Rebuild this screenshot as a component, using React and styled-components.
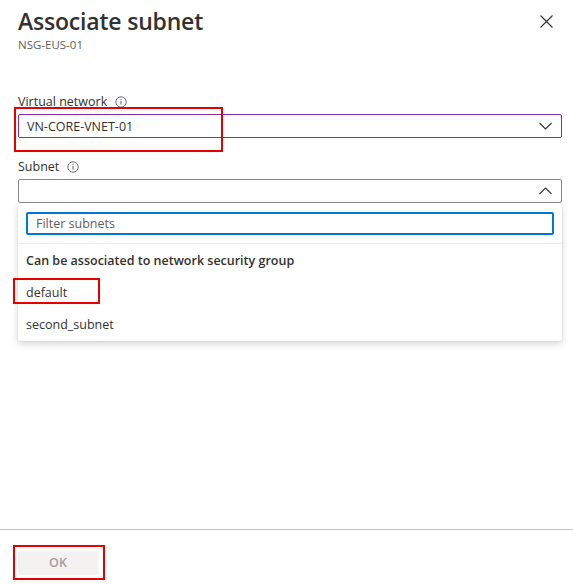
import styled, { createGlobalStyle } from "styled-components";

const GlobalStyle = createGlobalStyle`
  html, body {
    margin: 0;
    padding: 0;
    background: #fff;
  }
  body {
    font-family: "Open Sans", "Noto Sans", sans-serif;
    color: #323130;
  }
`;

const SUBNETS = ["default", "second_subnet"];

function InfoIcon() {
  return (
    <svg width="12" height="12" viewBox="0 0 12 12">
      <circle cx="6" cy="6" r="5.2" fill="none" stroke="#605e5c" strokeWidth="0.9" />
      <rect x="5.5" y="5" width="1" height="3.6" fill="#605e5c" />
      <circle cx="6" cy="3.6" r="0.65" fill="#605e5c" />
    </svg>
  );
}

function Chevron({ up }) {
  return (
    <svg width="13" height="8" viewBox="0 0 13 8">
      <path
        d={up ? "M0.5 7L6.5 1l6 6" : "M0.5 1l6 6 6-6"}
        fill="none"
        stroke="#323130"
        strokeWidth="1.1"
      />
    </svg>
  );
}

function CloseIcon() {
  return (
    <svg width="13" height="13" viewBox="0 0 13 13">
      <path d="M0.5 0.5l12 12M12.5 0.5l-12 12" stroke="#323130" strokeWidth="1.1" />
    </svg>
  );
}

export default function App() {
  return (
    <>
      <GlobalStyle />
      <Panel>
        <Header>
          <div>
            <Title>Associate subnet</Title>
            <Subtitle>NSG-EUS-01</Subtitle>
          </div>
          <CloseButton aria-label="Close">
            <CloseIcon />
          </CloseButton>
        </Header>

        <Body>
          <Field $top={40}>
            <Label>
              Virtual network <InfoIcon />
            </Label>
            <SelectBox $active>
              <span>VN-CORE-VNET-01</span>
              <Chevron />
              <Highlight $left={-5} $top={-8} $width={209} $height={45} />
            </SelectBox>
          </Field>

          <Field $top={20}>
            <Label>
              Subnet <InfoIcon />
            </Label>
            <SelectBox>
              <span />
              <Chevron up />
            </SelectBox>
            <Dropdown>
              <FilterWrap>
                <FilterInput placeholder="Filter subnets" />
              </FilterWrap>
              <GroupTitle>Can be associated to network security group</GroupTitle>
              {SUBNETS.map((name, i) => (
                <Option key={name}>
                  {name}
                  {i === 0 && <Highlight $left={-5} $top={1} $width={87} $height={26} />}
                </Option>
              ))}
            </Dropdown>
          </Field>
        </Body>

        <Footer>
          <OkButton disabled>
            OK
            <Highlight $left={-5} $top={-6} $width={92} $height={35} />
          </OkButton>
        </Footer>
      </Panel>
    </>
  );
}

const Panel = styled.div`
  width: 573px;
  height: 585px;
  display: flex;
  flex-direction: column;
  box-sizing: border-box;
  overflow: hidden;
`;

const Header = styled.header`
  display: flex;
  justify-content: space-between;
  align-items: flex-start;
  padding: 5px 18px 0 18px;
`;

const Title = styled.h1`
  margin: 0;
  font-size: 23px;
  font-weight: 600;
  line-height: 32px;
  color: #323130;
  letter-spacing: -0.2px;
`;

const Subtitle = styled.div`
  font-size: 11.5px;
  line-height: 16px;
  color: #605e5c;
`;

const CloseButton = styled.button`
  border: none;
  background: none;
  padding: 0;
  margin: 10px 2px 0 0;
  display: flex;
  cursor: pointer;
`;

const Body = styled.main`
  flex: 1;
  padding: 0 11px 0 18px;
`;

const Field = styled.div`
  margin-top: ${(p) => p.$top}px;
  position: relative;
`;

const Label = styled.label`
  display: flex;
  align-items: center;
  gap: 8px;
  font-size: 12.5px;
  line-height: 18px;
  color: #323130;
  margin-bottom: 3px;
`;

const SelectBox = styled.div`
  position: relative;
  height: 24px;
  box-sizing: border-box;
  border: 1px solid ${(p) => (p.$active ? "#8a2aa6" : "#8a8886")};
  border-radius: 2px;
  display: flex;
  align-items: center;
  justify-content: space-between;
  padding: 0 9px 0 8px;
  font-size: 12.5px;
  color: #323130;
`;

const Dropdown = styled.div`
  background: #fff;
  box-shadow: 0 3px 7px rgba(0, 0, 0, 0.16), 0 0 2px rgba(0, 0, 0, 0.1);
  border-radius: 0 0 2px 2px;
  padding-bottom: 0;
`;

const FilterWrap = styled.div`
  padding: 9px 8px 8px 8px;
  border-bottom: 1px solid #edebe9;
`;

const FilterInput = styled.input`
  display: block;
  width: 100%;
  box-sizing: border-box;
  height: 23px;
  border: 2px solid #0078d4;
  border-radius: 2px;
  padding: 0 8px;
  font-family: inherit;
  font-size: 12.5px;
  outline: none;
  &::placeholder {
    color: #605e5c;
  }
`;

const GroupTitle = styled.div`
  font-size: 12.5px;
  font-weight: 600;
  line-height: 32px;
  padding: 1px 8px 0;
  color: #323130;
`;

const Option = styled.div`
  position: relative;
  font-size: 12.5px;
  line-height: 32px;
  padding: 0 8px;
  color: #323130;
`;

const Highlight = styled.span`
  position: absolute;
  left: ${(p) => p.$left}px;
  top: ${(p) => p.$top}px;
  width: ${(p) => p.$width}px;
  height: ${(p) => p.$height}px;
  border: 2px solid #e60000;
  box-sizing: border-box;
  pointer-events: none;
`;

const Footer = styled.footer`
  border-top: 1px solid #c8c6c4;
  height: 56px;
  padding: 20px 18px 0;
  box-sizing: border-box;
`;

const OkButton = styled.button`
  position: relative;
  width: 80px;
  height: 24px;
  border: none;
  border-radius: 2px;
  background: #f3f2f1;
  color: #a19f9d;
  font-family: inherit;
  font-size: 12.5px;
  font-weight: 600;
  padding: 0;
`;
